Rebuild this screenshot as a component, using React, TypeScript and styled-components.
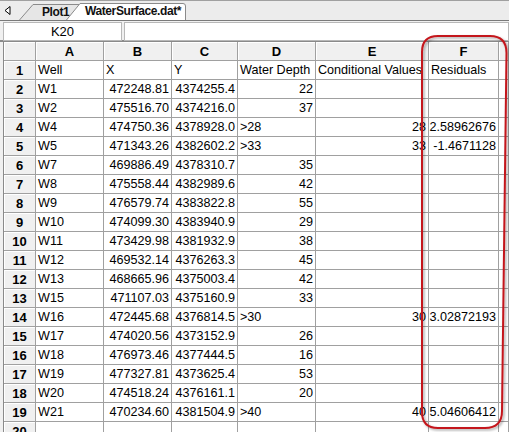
import React from "react";
import styled, { createGlobalStyle } from "styled-components";

const GlobalStyle = createGlobalStyle`
  html, body {
    margin: 0;
    padding: 0;
    background: #f0f0f0;
    overflow: hidden;
  }
  body {
    font-family: "Liberation Sans", Arial, sans-serif;
  }
`;

const Page = styled.div`
  position: relative;
  width: 509px;
  height: 432px;
  overflow: hidden;
  background: #f0f0f0;
`;

const TabBar = styled.div`
  display: flex;
  align-items: flex-end;
  height: 19px;
  border-top: 1px solid #a0a0a0;
  border-bottom: 1px solid #7a7a7a;
  background: #ececec;
`;

const ArrowButton = styled.div`
  width: 19px;
  height: 19px;
  display: flex;
  align-items: center;
  justify-content: center;
  padding-right: 4px;
  box-sizing: border-box;
`;

const Tab = styled.div<{ $width: number; $active?: boolean }>`
  position: relative;
  width: ${(p) => p.$width}px;
  height: ${(p) => (p.$active ? 18 : 17)}px;
  margin-left: ${(p) => (p.$active ? -14 : 0)}px;
  display: flex;
  align-items: center;
  box-sizing: border-box;
  padding-left: ${(p) => (p.$active ? 19 : 23)}px;
  font-size: 12px;
  font-weight: bold;
  color: #111;
  z-index: ${(p) => (p.$active ? 2 : 1)};
`;

const TabShape = styled.svg`
  position: absolute;
  left: 0;
  top: 0;
  overflow: visible;
`;

const TabLabel = styled.span`
  position: relative;
  white-space: nowrap;
  letter-spacing: -0.4px;
`;

const NameRow = styled.div`
  display: flex;
  gap: 2px;
  height: 21px;
  padding: 1px 0 0 3px;
  box-sizing: border-box;
  border-bottom: 2px solid #8a8a8a;
`;

const NameBox = styled.div<{ $grow?: boolean }>`
  ${(p) => (p.$grow ? "flex: 1;" : "width: 119px;")}
  height: 19px;
  background: #fff;
  border: 1px solid #b8b8b8;
  box-sizing: border-box;
  display: flex;
  align-items: center;
  justify-content: center;
  font-size: 13px;
  color: #000;
`;

const Sheet = styled.div`
  margin-left: 3px;
  border-left: 1px solid #8a8a8a;
  background: #fff;
`;

const Row = styled.div`
  display: grid;
  grid-template-columns: 32px 68px 68px 66px 78px 113px 70px 1fr;
  height: 19px;
`;

const HeadCell = styled.div`
  background: #f0f0f0;
  border-right: 1px solid #a0a0a0;
  border-bottom: 1px solid #a0a0a0;
  box-shadow: inset 1px 1px 0 #fff;
  display: flex;
  align-items: center;
  justify-content: center;
  font-size: 13px;
  font-weight: bold;
  color: #000;
  overflow: hidden;
`;

const Cell = styled.div<{ $right?: boolean; $spill?: boolean }>`
  position: relative;
  z-index: ${(p) => (p.$spill ? 1 : 0)};
  background: ${(p) => (p.$spill ? "transparent" : "#fff")};
  border-right: 1px solid #a0a0a0;
  border-bottom: 1px solid #a0a0a0;
  display: flex;
  align-items: center;
  justify-content: ${(p) => (p.$right ? "flex-end" : "flex-start")};
  padding: 0 2px 0 2px;
  font-size: 12.6px;
  color: #000;
  white-space: nowrap;
  overflow: visible;
  min-width: 0;
`;

const Callout = styled.svg`
  position: absolute;
  left: 0;
  top: 0;
  pointer-events: none;
  z-index: 5;
`;

type RowData = [string, string, string, string, string, string];

const rows: RowData[] = [
  ["Well", "X", "Y", "Water Depth", "Conditional Values", "Residuals"],
  ["W1", "472248.81", "4374255.4", "22", "", ""],
  ["W2", "475516.70", "4374216.0", "37", "", ""],
  ["W4", "474750.36", "4378928.0", ">28", "28", "2.58962676"],
  ["W5", "471343.26", "4382602.2", ">33", "33", "-1.4671128"],
  ["W7", "469886.49", "4378310.7", "35", "", ""],
  ["W8", "475558.44", "4382989.6", "42", "", ""],
  ["W9", "476579.74", "4383822.8", "55", "", ""],
  ["W10", "474099.30", "4383940.9", "29", "", ""],
  ["W11", "473429.98", "4381932.9", "38", "", ""],
  ["W12", "469532.14", "4376263.3", "45", "", ""],
  ["W13", "468665.96", "4375003.4", "42", "", ""],
  ["W15", "471107.03", "4375160.9", "33", "", ""],
  ["W16", "472445.68", "4376814.5", ">30", "30", "3.02872193"],
  ["W17", "474020.56", "4373152.9", "26", "", ""],
  ["W18", "476973.46", "4377444.5", "16", "", ""],
  ["W19", "477327.81", "4373625.4", "53", "", ""],
  ["W20", "474518.24", "4376161.1", "20", "", ""],
  ["W21", "470234.60", "4381504.9", ">40", "40", "5.04606412"],
  ["", "", "", "", "", ""],
];

const isNum = (s: string) => /^-?\d/.test(s);

export default function App() {
  return (
    <Page>
      <GlobalStyle />
      <TabBar>
        <ArrowButton>
          <svg width="7" height="9" viewBox="0 0 7 9">
            <polygon points="6,0.5 6,8.5 1,4.5" fill="#fff" stroke="#000" strokeWidth="1" />
          </svg>
        </ArrowButton>
        <Tab $width={61}>
          <TabShape width="61" height="17">
            <path d="M0.5 17 L14 1.5 L61 1.5 L61 17 Z" fill="#e6e6e6" stroke="none" />
            <path d="M0.5 17 L14 1.5 L61 1.5" fill="none" stroke="#8a8a8a" />
          </TabShape>
          <TabLabel>Plot1</TabLabel>
        </Tab>
        <Tab $width={121} $active>
          <TabShape width="121" height="18">
            <path d="M0.5 18 L14 1.5 L117 1.5 Q119.5 1.5 119.5 4 L119.5 18 Z" fill="#fff" stroke="none" />
            <path d="M0.5 18 L14 1.5 L117 1.5 Q119.5 1.5 119.5 4 L119.5 18" fill="none" stroke="#8a8a8a" />
          </TabShape>
          <TabLabel>WaterSurface.dat*</TabLabel>
        </Tab>
      </TabBar>

      <NameRow>
        <NameBox>K20</NameBox>
        <NameBox $grow />
      </NameRow>

      <Sheet>
        <Row>
          <HeadCell />
          {["A", "B", "C", "D", "E", "F", ""].map((c, i) => (
            <HeadCell key={i}>{c}</HeadCell>
          ))}
        </Row>
        {rows.map((r, i) => (
          <Row key={i}>
            <HeadCell>{i + 1}</HeadCell>
            {r.map((v, j) => (
              <Cell key={j} $right={i > 0 && j > 0 && isNum(v)} $spill={j === 4 && i === 0}>
                {v}
              </Cell>
            ))}
            <Cell />
          </Row>
        ))}
      </Sheet>

      <Callout width="509" height="432" viewBox="0 0 509 432">
        <defs>
          <filter id="sh" x="-10%" y="-10%" width="130%" height="130%">
            <feDropShadow dx="1.5" dy="1.5" stdDeviation="1.2" floodColor="#000" floodOpacity="0.35" />
          </filter>
        </defs>
        <path
          d="M438 36 L490 36 Q506.5 36 506.5 53 L502 411 Q502 428 485 428 L438 428 Q422 428 422 412 L422 52 Q422 36 438 36 Z"
          fill="none"
          stroke="#c4161c"
          strokeWidth="2"
          filter="url(#sh)"
        />
      </Callout>
    </Page>
  );
}
